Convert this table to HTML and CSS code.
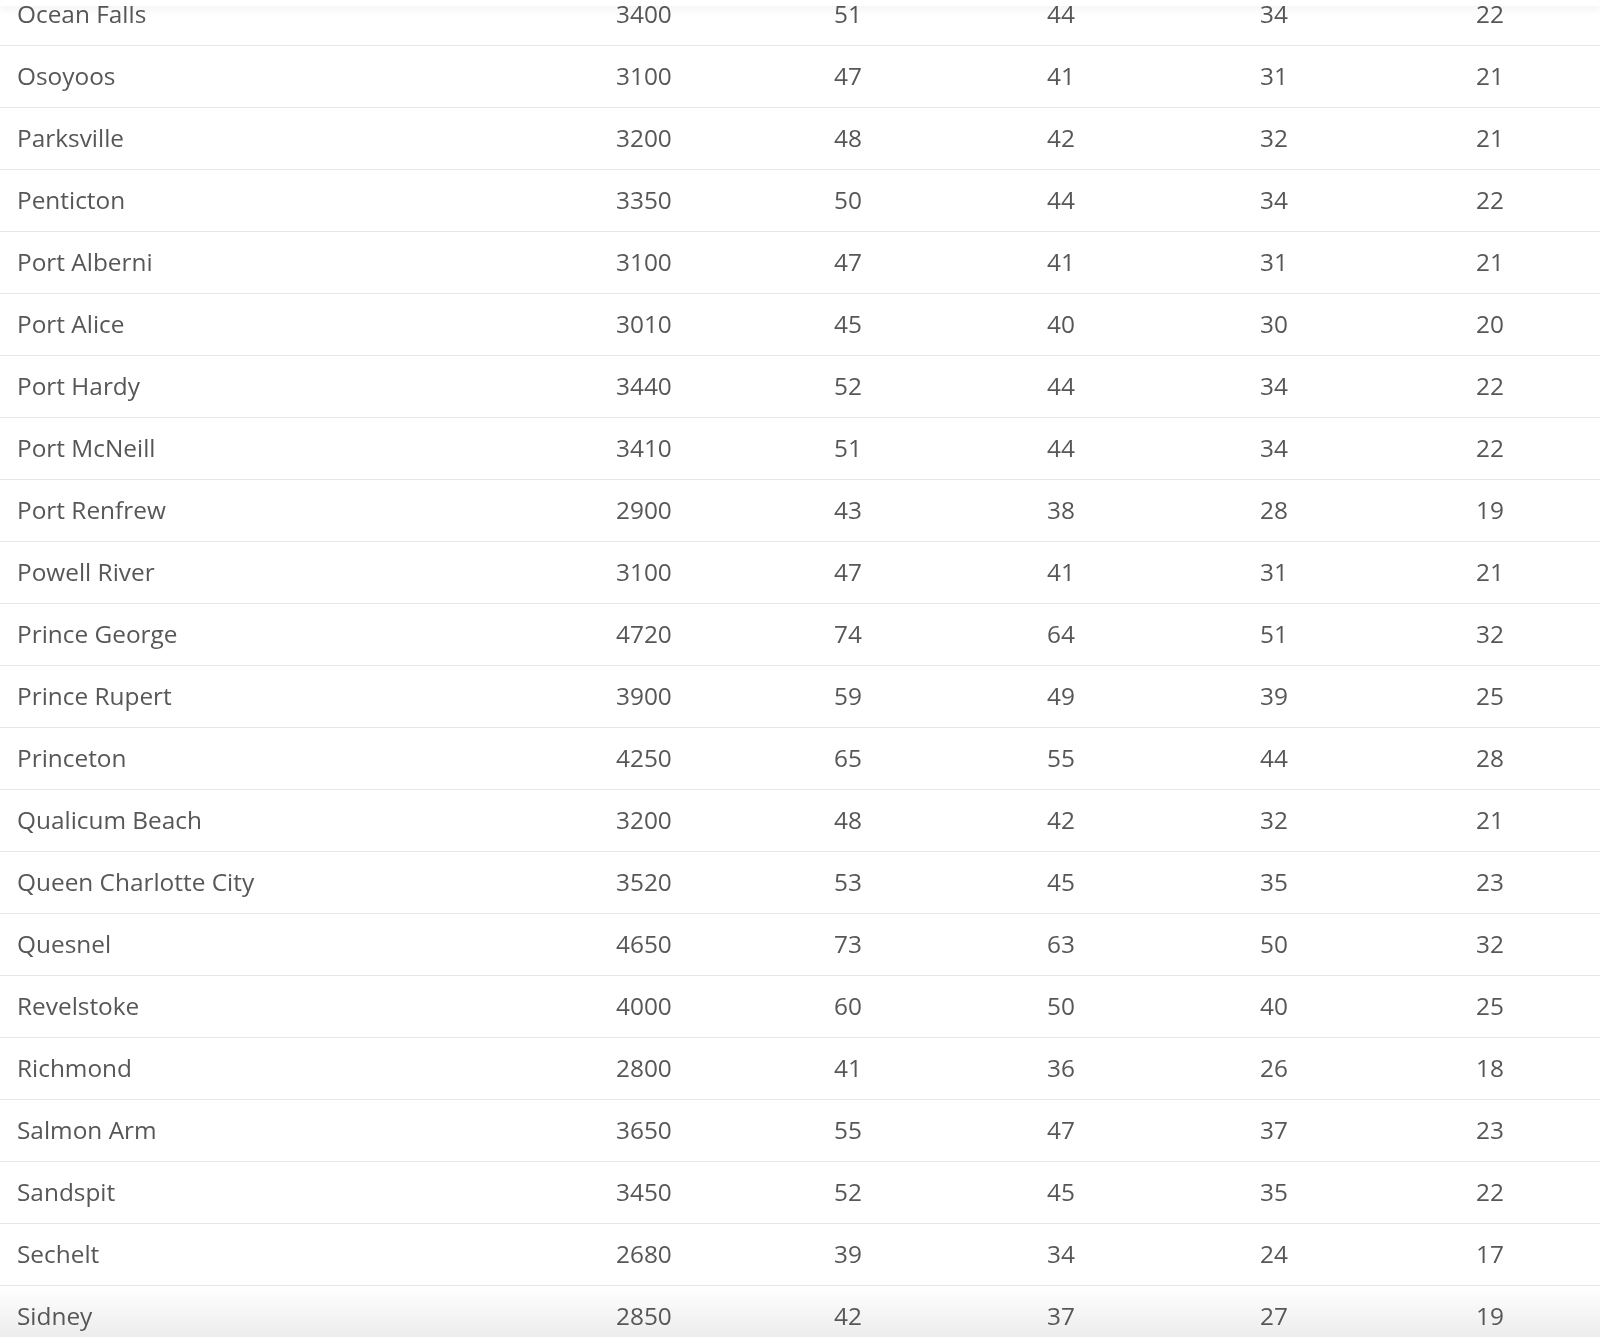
FILE: index.html
```html
<!DOCTYPE html>
<html>
<head>
<meta charset="utf-8">
<link rel="stylesheet" href="styles.css">
</head>
<body>
<div class="topbar"></div>
<div class="bottomfade"></div>
<div class="scroller">
<table class="rates">
<colgroup>
<col class="c-name"><col class="c1"><col class="c2"><col class="c3"><col class="c4"><col class="c5">
</colgroup>
<tbody>
<tr><td>Ocean Falls</td><td>3400</td><td>51</td><td>44</td><td>34</td><td>22</td></tr>
<tr><td>Osoyoos</td><td>3100</td><td>47</td><td>41</td><td>31</td><td>21</td></tr>
<tr><td>Parksville</td><td>3200</td><td>48</td><td>42</td><td>32</td><td>21</td></tr>
<tr><td>Penticton</td><td>3350</td><td>50</td><td>44</td><td>34</td><td>22</td></tr>
<tr><td>Port Alberni</td><td>3100</td><td>47</td><td>41</td><td>31</td><td>21</td></tr>
<tr><td>Port Alice</td><td>3010</td><td>45</td><td>40</td><td>30</td><td>20</td></tr>
<tr><td>Port Hardy</td><td>3440</td><td>52</td><td>44</td><td>34</td><td>22</td></tr>
<tr><td>Port McNeill</td><td>3410</td><td>51</td><td>44</td><td>34</td><td>22</td></tr>
<tr><td>Port Renfrew</td><td>2900</td><td>43</td><td>38</td><td>28</td><td>19</td></tr>
<tr><td>Powell River</td><td>3100</td><td>47</td><td>41</td><td>31</td><td>21</td></tr>
<tr><td>Prince George</td><td>4720</td><td>74</td><td>64</td><td>51</td><td>32</td></tr>
<tr><td>Prince Rupert</td><td>3900</td><td>59</td><td>49</td><td>39</td><td>25</td></tr>
<tr><td>Princeton</td><td>4250</td><td>65</td><td>55</td><td>44</td><td>28</td></tr>
<tr><td>Qualicum Beach</td><td>3200</td><td>48</td><td>42</td><td>32</td><td>21</td></tr>
<tr><td>Queen Charlotte City</td><td>3520</td><td>53</td><td>45</td><td>35</td><td>23</td></tr>
<tr><td>Quesnel</td><td>4650</td><td>73</td><td>63</td><td>50</td><td>32</td></tr>
<tr><td>Revelstoke</td><td>4000</td><td>60</td><td>50</td><td>40</td><td>25</td></tr>
<tr><td>Richmond</td><td>2800</td><td>41</td><td>36</td><td>26</td><td>18</td></tr>
<tr><td>Salmon Arm</td><td>3650</td><td>55</td><td>47</td><td>37</td><td>23</td></tr>
<tr><td>Sandspit</td><td>3450</td><td>52</td><td>45</td><td>35</td><td>22</td></tr>
<tr><td>Sechelt</td><td>2680</td><td>39</td><td>34</td><td>24</td><td>17</td></tr>
<tr><td>Sidney</td><td>2850</td><td>42</td><td>37</td><td>27</td><td>19</td></tr>
</tbody>
</table>
</div>
</body>
</html>
```

FILE: styles.css
```css
html, body {
  margin: 0;
  padding: 0;
  background: #ffffff;
  overflow: hidden;
}
body {
  font-family: "Open Sans", "Liberation Sans", sans-serif;
  color: #575757;
  height: 1337px;
}
.scroller {
  position: relative;
  z-index: 1;
  margin-top: -16px;
}
.rates {
  width: 1600px;
  border-collapse: collapse;
  table-layout: fixed;
}
.c-name { width: 598px; }
.c1 { width: 218px; }
.c2 { width: 213px; }
.c3 { width: 213px; }
.c4 { width: 216px; }
.c5 { width: 142px; }
.rates td {
  height: 59px;
  padding: 0 0 2px 18px;
  font-size: 24.4px;
  line-height: 32px;
  vertical-align: middle;
  border-bottom: 1px solid #e6e6e6;
  white-space: nowrap;
}
.rates td:first-child {
  padding-left: 17px;
}
.topbar {
  position: fixed;
  top: 0;
  left: 0;
  right: 0;
  height: 6px;
  background: #ffffff;
  box-shadow: 0 3px 10px rgba(0, 0, 0, 0.07);
  z-index: 2;
}
.bottomfade {
  position: fixed;
  left: 0;
  right: 0;
  bottom: 0;
  height: 50px;
  background: linear-gradient(to bottom, rgba(240, 240, 240, 0), rgba(236, 236, 236, 1));
  z-index: 0;
}
```
